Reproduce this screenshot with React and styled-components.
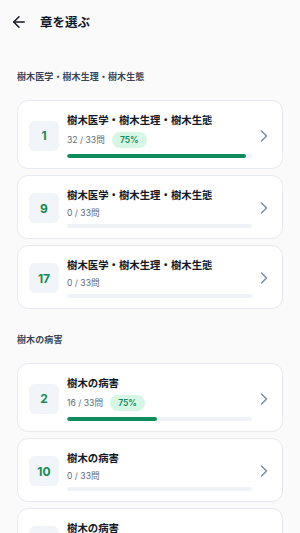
import React from 'react';
import styled, { createGlobalStyle } from 'styled-components';
import { ArrowLeft, ChevronRight } from 'lucide-react';

const GlobalStyle = createGlobalStyle`
  html, body {
    margin: 0;
    padding: 0;
    background: #fafafa;
  }
  body {
    font-family: "Noto Sans CJK JP", "Noto Sans", Inter, sans-serif;
    color: #111827;
  }
`;

const Page = styled.div`
  width: 300px;
  min-height: 533px;
  background: #fafafa;
`;

const Header = styled.header`
  height: 44px;
  display: flex;
  align-items: center;
  gap: 12px;
  padding: 0 0 0 10px;
`;

const BackButton = styled.button`
  display: flex;
  align-items: center;
  justify-content: center;
  width: 18px;
  height: 18px;
  padding: 0;
  border: none;
  background: transparent;
  color: #111827;
  cursor: pointer;
`;

const Title = styled.h1`
  margin: 0;
  font-size: 12.5px;
  font-weight: 700;
  line-height: 16px;
  color: #111827;
`;

const Main = styled.main`
  padding: 2px 17px 0;
`;

const Section = styled.section`
  padding-top: 25px;
`;

const SectionLabel = styled.h2`
  margin: 0 0 17px;
  font-size: 9px;
  line-height: 12px;
  font-weight: 600;
  color: #3b4556;
  letter-spacing: 0.1px;
`;

const CardList = styled.div`
  display: flex;
  flex-direction: column;
  gap: 6px;
`;

const Card = styled.div`
  display: flex;
  align-items: center;
  background: #ffffff;
  border: 1px solid #e6e9ef;
  border-radius: 11px;
  padding: 12px 8px 10px 11px;
  cursor: pointer;
`;

const NumberBox = styled.div`
  flex: none;
  width: 30px;
  height: 30px;
  border-radius: 6px;
  background: #f1f4f8;
  display: flex;
  align-items: center;
  justify-content: center;
  font-family: Inter, "Noto Sans", sans-serif;
  font-size: 12px;
  font-weight: 700;
  color: #178a57;
`;

const Body = styled.div`
  flex: 1;
  margin-left: 8px;
  min-width: 0;
`;

const CardTitle = styled.div`
  font-size: 10.4px;
  line-height: 14px;
  font-weight: 700;
  color: #111827;
  white-space: nowrap;
`;

const MetaRow = styled.div`
  display: flex;
  align-items: center;
  gap: 7px;
  margin-top: 5px;
  min-height: 12px;
`;

const Count = styled.span`
  font-family: Inter, "Noto Sans CJK JP", sans-serif;
  font-size: 8.6px;
  line-height: 12px;
  color: #5f6b7c;
`;

const Badge = styled.span`
  display: inline-flex;
  align-items: center;
  justify-content: center;
  width: 35px;
  height: 16px;
  border-radius: 8px;
  background: #d5f7e4;
  color: #12895a;
  font-family: Inter, "Noto Sans", sans-serif;
  font-size: 8.5px;
  font-weight: 600;
`;

const Track = styled.div`
  margin-top: ${(p) => (p.$tight ? 6 : 5)}px;
  height: 4px;
  border-radius: 2px;
  background: #eff2f6;
  overflow: hidden;
`;

const Fill = styled.div`
  height: 100%;
  border-radius: 2px;
  background: #0e8c5c;
`;

const Chevron = styled.div`
  flex: none;
  margin-left: 2px;
  display: flex;
  color: #7d8ba3;
`;

const sections = [
  {
    label: '樹木医学・樹木生理・樹木生態',
    chapters: [
      { no: 1, done: 32, total: 33, rate: 75 },
      { no: 9, done: 0, total: 33 },
      { no: 17, done: 0, total: 33 },
    ],
  },
  {
    label: '樹木の病害',
    chapters: [
      { no: 2, done: 16, total: 33, rate: 75 },
      { no: 10, done: 0, total: 33 },
      { no: 18, done: 0, total: 33 },
    ],
  },
];

function ChapterCard({ title, chapter }) {
  const pct = (chapter.done / chapter.total) * 100;
  return (
    <Card>
      <NumberBox>{chapter.no}</NumberBox>
      <Body>
        <CardTitle>{title}</CardTitle>
        <MetaRow>
          <Count>
            {chapter.done} / {chapter.total}問
          </Count>
          {chapter.rate != null && <Badge>{chapter.rate}%</Badge>}
        </MetaRow>
        <Track $tight={chapter.rate != null}>
          {pct > 0 && <Fill style={{ width: `${pct}%` }} />}
        </Track>
      </Body>
      <Chevron>
        <ChevronRight size={20} strokeWidth={1.8} />
      </Chevron>
    </Card>
  );
}

export default function App() {
  return (
    <Page>
      <GlobalStyle />
      <Header>
        <BackButton aria-label="戻る">
          <ArrowLeft size={18} strokeWidth={2} />
        </BackButton>
        <Title>章を選ぶ</Title>
      </Header>
      <Main>
        {sections.map((section) => (
          <Section key={section.label}>
            <SectionLabel>{section.label}</SectionLabel>
            <CardList>
              {section.chapters.map((ch) => (
                <ChapterCard key={ch.no} title={section.label} chapter={ch} />
              ))}
            </CardList>
          </Section>
        ))}
      </Main>
    </Page>
  );
}
